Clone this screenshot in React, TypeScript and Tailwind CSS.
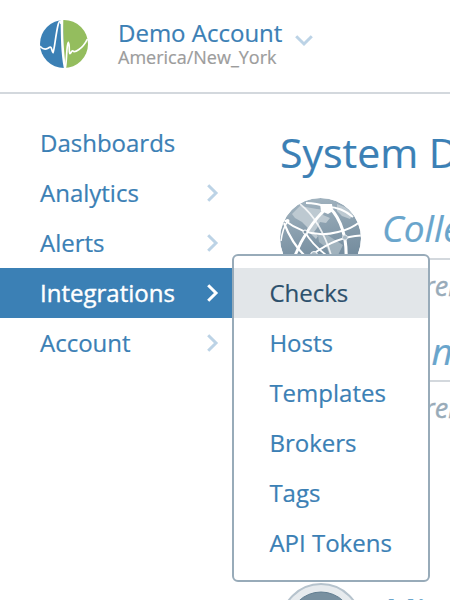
import React from "react";

const font = "font-['Open_Sans','Noto_Sans',sans-serif]";

function Chevron({ className }: { className: string }) {
  return (
    <svg className={className} width="12" height="18" viewBox="0 0 12 18" fill="none" stroke="currentColor" strokeWidth="3">
      <path d="M1.2 1.2 L9 9 L1.2 16.8" />
    </svg>
  );
}

function Logo() {
  return (
    <svg width="48" height="48" viewBox="0 0 48 48" fill="none">
      <path d="M24 0 A24 24 0 0 0 24 48 Z" fill="#3b80b5" />
      <path d="M23 0 H24 A24 24 0 0 1 24 48 Z" fill="#94bd5e" />
      <path d="M0 26.3 C2.5 29 5.5 29.5 7.5 28.5 C9 27.8 10 26.3 11 27.5 C11.8 28.5 12 31.5 13 32.5 C14.5 30 15.5 15 18.3 4 C19.5 0.5 20.7 0 21 4" stroke="#fff" strokeWidth="1.7" />
      <path d="M20.6 0 H23.3 C22.9 16 24 34 26 48 H23.8 C21 34 20.8 16 20.6 0 Z" fill="#fff" />
      <path d="M25.3 48 C27 40 26.4 24.5 28.3 22.5 C30 24.5 28.6 31.5 29.8 33.5 C31 34 31.5 30 33 31 C34.5 33 42.5 29 47.4 19" stroke="#fff" strokeWidth="1.7" />
    </svg>
  );
}

function Globe() {
  return (
    <svg className="shrink-0" width="82" height="82" viewBox="0 0 82 82" fill="none">
      <defs>
        <linearGradient id="sphere" x1="0.3" y1="0" x2="0.5" y2="1">
          <stop offset="0" stopColor="#a3b4c0" />
          <stop offset="0.5" stopColor="#8399a9" />
          <stop offset="1" stopColor="#698396" />
        </linearGradient>
        <clipPath id="disc"><circle cx="40.5" cy="40.5" r="40.5" /></clipPath>
      </defs>
      <g clipPath="url(#disc)">
        <circle cx="40.5" cy="40.5" r="40.5" fill="url(#sphere)" />
        <g fill="#bdc9d1">
          <path d="M12 16 L20 8 L37 11 L45 12 L43 17 L50 20 L46 25 L40 24 L37 30 L34 34 L38 38 L36 41 L30 35 L27 29 L22 24 L15 20 Z" />
          <path d="M57 6 L65 9 L73 16 L70 21 L62 18 L57 13 Z" />
          <path d="M38 37 L46 36 L55 42 L63 47 L58 57 L51 61 L47 50 L39 44 Z" opacity=".6" />
        </g>
        <g stroke="#fff">
          <path d="M26 5 C34 5 42 7 48 9 C58 9 66 13 73 19" strokeWidth="2.2" />
          <path d="M20 6 C34 17 45 36 52 60" strokeWidth="1.7" opacity=".8" />
          <path d="M47 10 C34 21 21 41 14 60" strokeWidth="2.9" />
          <path d="M50 10 C61 21 67 40 66 60" strokeWidth="3.1" />
          <path d="M4 22 C17 32 36 40 58 34 C68 32 75 28 81 23" strokeWidth="1.9" />
          <path d="M25 34 C30 43 37 50 46 57" strokeWidth="1.7" />
          <path d="M81 37.5 C64 38 47 46 33 56" strokeWidth="1.9" />
          <path d="M1 43 C2 35 4 28 8 23" strokeWidth="1.5" />
        </g>
        <path d="M40 6 L52 6 L53 13 L48 16 L41 13 Z" fill="#fff" />
        <circle cx="7.5" cy="23" r="2" fill="#fff" />
        <circle cx="25" cy="34" r="2" fill="#8197a7" stroke="#fff" />
        <circle cx="65" cy="39.5" r="2.5" fill="#a9b9c4" stroke="#dfe5e9" />
        <circle cx="34" cy="57" r="3.5" fill="#a9b9c4" stroke="#fff" />
        <path d="M4 25 C9 38 16 50 27 60" stroke="#fff" strokeWidth="2.1" />
      </g>
    </svg>
  );
}

const nav = [
  { label: "Dashboards", sub: false },
  { label: "Analytics", sub: true },
  { label: "Alerts", sub: true },
  { label: "Integrations", sub: true, active: true },
  { label: "Account", sub: true },
];

const menu = ["Checks", "Hosts", "Templates", "Brokers", "Tags", "API Tokens"];

function Entry({ title, note, leading }: { title: string; note: string; leading: string }) {
  return (
    <div className="h-[122px] w-[300px] shrink-0">
      <h2 className={`h-[62px] border-b-2 border-[#d3d8dd] text-[37px] italic text-[#69a5cc] ${leading}`}>{title}</h2>
      <p className="text-[27px] leading-[51px] italic text-[#98abb9] [-webkit-text-stroke:0.4px]">{note}</p>
    </div>
  );
}

export default function App() {
  return (
    <div className={`relative h-[600px] w-[450px] overflow-hidden bg-white text-[#3b80b5] [-webkit-text-stroke:0.2px] ${font}`}>
      <header className="flex h-[94px] border-b-2 border-[#d3d8dd] pl-10">
        <div className="pt-5"><Logo /></div>
        <div className="w-[177px] pt-[17px] pl-[30px] whitespace-nowrap">
          <div className="text-2xl leading-8">Demo Account</div>
          <div className="text-lg leading-4 text-[#9c9c9c]">America/New_York</div>
        </div>
        <div className="pt-8 pl-[33px]"><Chevron className="rotate-90 text-[#bcd3e6]" /></div>
      </header>
      <div className="flex">
        <nav className="w-[232px] shrink-0 pt-6">
          {nav.map((n) => (
            <div key={n.label} className={`flex h-[50px] items-center justify-between pr-[13px] pl-10 text-2xl ${n.active ? "bg-[#3b80b5] text-white [-webkit-text-stroke:0.4px]" : ""}`}>
              <span>{n.label}</span>
              {n.sub && <Chevron className={n.active ? "text-white" : "text-[#bcd3e6]"} />}
            </div>
          ))}
        </nav>
        <main className="w-[402px] shrink-0 pl-12">
          <h1 className="h-[104px] pt-[29px] text-[41px] leading-[59px] whitespace-nowrap">System Dashboard</h1>
          <div className="flex gap-5">
            <Globe />
            <div>
              <Entry title="Collectors" note="Current" leading="leading-[59px]" />
              <Entry title="Donut" note="Current" leading="leading-[62px] tracking-[2px]" />
            </div>
          </div>
          <div className="mt-[141px] flex gap-5">
            <svg className="shrink-0" width="82" height="82" viewBox="0 0 82 82">
              <circle cx="41" cy="41" r="40" fill="#e7ebee" stroke="#b6c3cd" strokeWidth="2" />
              <circle cx="41" cy="41" r="32" fill="#7890a0" stroke="#627e91" />
            </svg>
            <Entry title="Minutes" note="Current" leading="leading-[55px]" />
          </div>
        </main>
      </div>
      <div className="absolute top-[254px] left-[232px] h-[328px] w-[198px] rounded-md border-2 border-[#98abb9] bg-white pt-3">
        {menu.map((m, i) => (
          <div key={m} className={`flex h-[50px] items-center pl-[35.4px] text-2xl ${i === 0 ? "bg-[#e2e6e9] text-[#2c506c]" : ""}`}>{m}</div>
        ))}
      </div>
    </div>
  );
}
